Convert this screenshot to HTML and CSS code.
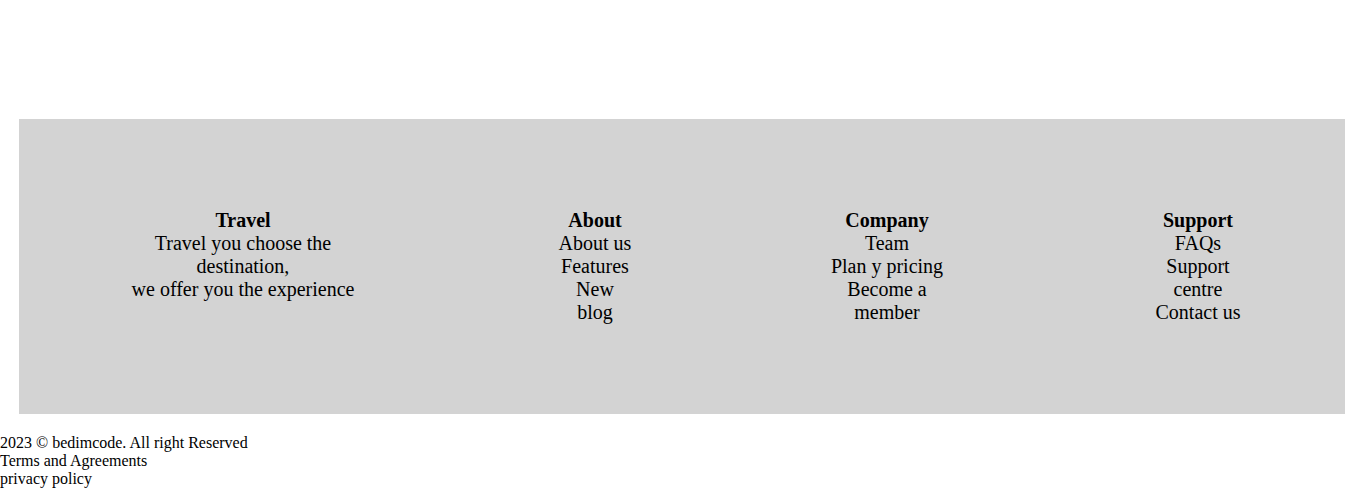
FILE: index.html
```html
<!DOCTYPE html>
<html>
<head>
<meta charset="utf-8">
<link rel="stylesheet" href="styles.css">
</head>
<body>
<div class="spacer"></div>
<footer class="footer">
  <div class="col">
    <div class="inner travel">
      <div class="title">Travel</div>
      <div>Travel you choose the destination,<br>we offer you the experience</div>
    </div>
  </div>
  <div class="col">
    <div class="inner about">
      <div class="title">About</div>
      <div>About us</div>
      <div>Features</div>
      <div>New blog</div>
    </div>
  </div>
  <div class="col">
    <div class="inner company">
      <div class="title">Company</div>
      <div>Team</div>
      <div>Plan y pricing</div>
      <div>Become a member</div>
    </div>
  </div>
  <div class="col">
    <div class="inner support">
      <div class="title">Support</div>
      <div>FAQs</div>
      <div>Support centre</div>
      <div>Contact us</div>
    </div>
  </div>
</footer>
<div class="bottom">
  <div>2023 © bedimcode. All right Reserved</div>
  <div>Terms and Agreements</div>
  <div>privacy policy</div>
</div>
</body>
</html>
```

FILE: styles.css
```css
html, body {
  margin: 0;
  padding: 0;
  background: #fff;
  color: #000;
  font-family: "Liberation Serif", "Times New Roman", serif;
}
.spacer {
  height: 119px;
}
.footer {
  margin: 0 20px 0 19px;
  height: 295px;
  box-sizing: border-box;
  padding-top: 90px;
  background: #d3d3d3;
  display: grid;
  grid-template-columns: 448px 256px 328px 294px;
  align-items: start;
  font-size: 20px;
}
.col {
  display: flex;
  justify-content: center;
}
.inner {
  text-align: center;
}
.title {
  font-weight: bold;
}
.travel { width: 240px; }
.about { width: 76px; }
.company { width: 120px; }
.support { width: 100px; }
.bottom {
  margin-top: 20px;
  font-size: 16px;
}
```
